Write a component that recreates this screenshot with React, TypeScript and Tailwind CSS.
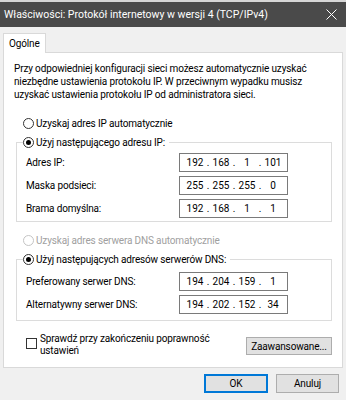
import React from 'react';

const font = { fontFamily: 'Roboto, "Noto Sans", sans-serif' };

const Radio = ({ checked, disabled, label }: { checked?: boolean; disabled?: boolean; label: string }) => (
  <div className={`flex items-center h-[13px] ${disabled ? 'text-[#a0a0a0]' : 'text-black'}`}>
    <span
      className={`w-[11px] h-[11px] rounded-full border flex items-center justify-center bg-white ${
        disabled ? 'border-[#c4c4c4]' : 'border-[#333333]'
      }`}
    >
      {checked && <span className="w-[5px] h-[5px] rounded-full bg-black" />}
    </span>
    <span className="ml-[2px]">{label}</span>
  </div>
);

const IpField = ({ ip }: { ip: string }) => {
  const parts = ip.split('.');
  return (
    <div className="w-[109px] h-[19px] border border-[#7a7a7a] bg-white flex items-center pl-[4px] tracking-normal">
      {parts.map((p, i) => (
        <React.Fragment key={i}>
          <span className="w-[22px] text-center">{p}</span>
          {i < 3 && <span className="w-[4px] text-center">.</span>}
        </React.Fragment>
      ))}
    </div>
  );
};

const Row = ({ label, ip }: { label: string; ip: string }) => (
  <div className="flex items-center pl-[3px]">
    <span className="w-[153px]">{label}</span>
    <IpField ip={ip} />
  </div>
);

export default function App() {
  return (
    <div
      className="w-[346px] h-[400px] bg-[#f0f0f0] overflow-hidden text-[10px] tracking-[-0.15px] text-black"
      style={font}
    >
      <div className="h-[2px] bg-[#d6d6d6]" />
      <div className="h-[25px] bg-[#4a4a4a] flex items-center justify-between pl-[4px] pr-[8px] text-white text-[10.5px] tracking-normal">
        <span>Właściwości: Protokół internetowy w wersji 4 (TCP/IPv4)</span>
        <svg width="11" height="11" viewBox="0 0 11 11" className="mr-[1px]">
          <path d="M0.5 0.5 L10.5 10.5 M10.5 0.5 L0.5 10.5" stroke="#ffffff" strokeWidth="1" />
        </svg>
      </div>

      <div className="pt-[6px] px-[3px]">
        <div className="flex">
          <div className="relative z-10 h-[20px] -mb-[1px] px-[5px] bg-white border border-b-0 border-[#d9d9d9] flex items-center">
            Ogólne
          </div>
        </div>

        <div className="h-[316px] bg-white border border-[#d9d9d9] px-[10px] pt-[9px]">
          <p className="leading-[13px] whitespace-nowrap">
            Przy odpowiedniej konfiguracji sieci możesz automatycznie uzyskać
            <br />
            niezbędne ustawienia protokołu IP. W przeciwnym wypadku musisz
            <br />
            uzyskać ustawienia protokołu IP od administratora sieci.
          </p>

          <div className="mt-[16px] ml-[9px]">
            <Radio label="Uzyskaj adres IP automatycznie" />
          </div>

          <fieldset className="mt-[6px] ml-[2px] border border-[#dcdcdc] pl-[6px] pb-[3px]">
            <legend className="pr-[4px]">
              <Radio checked label="Użyj następującego adresu IP:" />
            </legend>
            <div className="flex flex-col gap-[4px] pt-[4px]">
              <Row label="Adres IP:" ip="192.168.1.101" />
              <Row label="Maska podsieci:" ip="255.255.255.0" />
              <Row label="Brama domyślna:" ip="192.168.1.1" />
            </div>
          </fieldset>

          <div className="mt-[12px] ml-[9px]">
            <Radio disabled label="Uzyskaj adres serwera DNS automatycznie" />
          </div>

          <fieldset className="mt-[6px] ml-[2px] border border-[#dcdcdc] pl-[6px] pb-[6px]">
            <legend className="pr-[4px]">
              <Radio checked label="Użyj następujących adresów serwerów DNS:" />
            </legend>
            <div className="flex flex-col gap-[4px] pt-[6px]">
              <Row label="Preferowany serwer DNS:" ip="194.204.159.1" />
              <Row label="Alternatywny serwer DNS:" ip="194.202.152.34" />
            </div>
          </fieldset>

          <div className="mt-[16px] flex items-start justify-between">
            <div className="flex items-start ml-[12px]">
              <span className="mt-[1px] w-[11px] h-[11px] border border-[#333333] bg-white" />
              <span className="ml-[3px] leading-[12px] -mt-[4px]">
                Sprawdź przy zakończeniu poprawność
                <br />
                ustawień
              </span>
            </div>
            <button className="w-[86px] h-[18px] bg-[#e1e1e1] border border-[#adadad] flex items-center justify-center">
              Zaawansowane...
            </button>
          </div>
        </div>
      </div>

      <div className="flex justify-end gap-[8px] pr-[7px] mt-[6px]">
        <button className="w-[64px] h-[19px] bg-[#e1e1e1] border-2 border-[#0078d7] flex items-center justify-center">
          OK
        </button>
        <button className="w-[63px] h-[19px] bg-[#e1e1e1] border border-[#adadad] flex items-center justify-center">
          Anuluj
        </button>
      </div>
    </div>
  );
}
